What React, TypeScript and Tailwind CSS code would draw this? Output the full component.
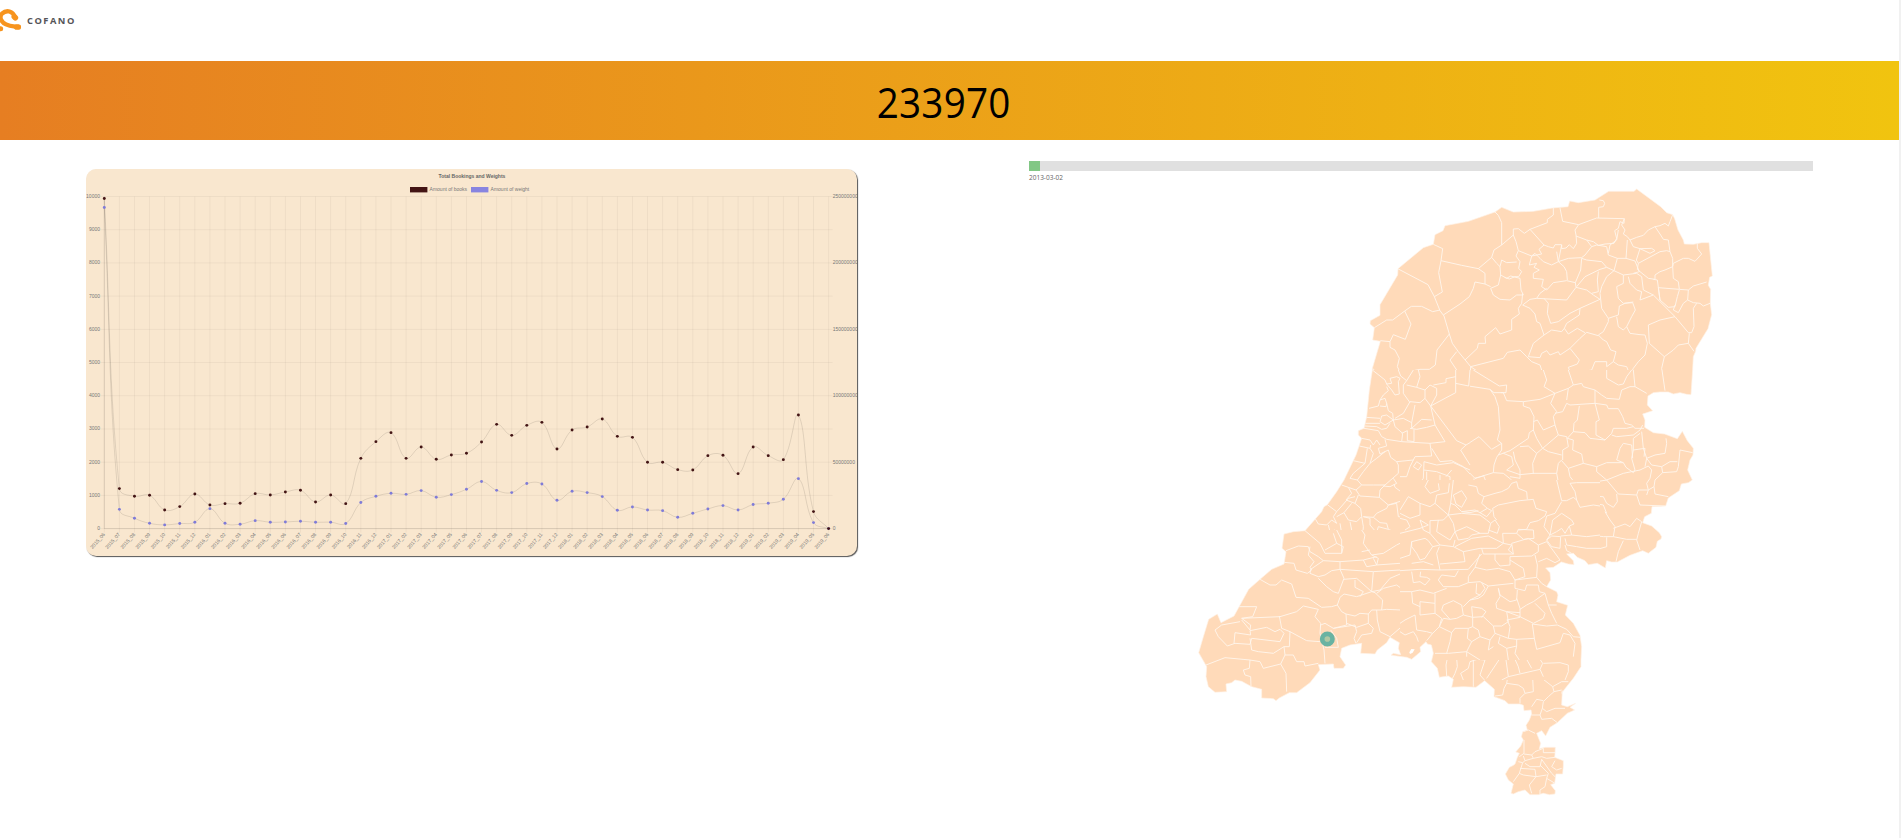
import React from "react";

type Point = { x: number; y: number };

/* ---------- chart data ---------- */

const books = [
  9940, 1204, 973, 1003, 562, 662, 1043, 712, 752, 762, 1053, 1013, 1103, 1153, 802, 1013, 752, 2116, 2618, 2889,
  2116, 2457, 2086, 2217, 2267, 2608, 3139, 2808, 3109, 3200, 2397, 2969, 3059, 3300, 2778, 2748, 1996, 1996, 1775,
  1765, 2197, 2207, 1655, 2457, 2197, 2076, 3420, 512, 0,
];

// millions
const weights = [
  241.7, 14.5, 7.8, 4, 2.8, 3.8, 4.8, 15, 4, 3.3, 6, 4.8, 5, 5.5, 4.8, 4.8, 3.8, 19.6, 24.3, 26.6, 25.8, 28.6, 23.6,
  25.6, 29.6, 35.4, 28.8, 27.1, 33.9, 33.6, 21.3, 28.1, 27.1, 24.1, 13.8, 16.3, 14, 13.5, 8.5, 11.5, 14.8, 17.3, 14,
  18.1, 19.1, 22.1, 37.6, 4.5, 0,
];

const months = books.map((_, i) => {
  const m = i + 5;
  return `${2015 + Math.floor(m / 12)}_${String((m % 12) + 1).padStart(2, "0")}`;
});

const LEFT = 18.3;
const RIGHT = 742.6;
const TOP = 27.5;
const BOTTOM = 359.6;
const STEP = (RIGHT - LEFT) / (books.length - 1);

const place = (values: number[], max: number): Point[] =>
  values.map((v, i) => ({ x: LEFT + i * STEP, y: BOTTOM - (v / max) * (BOTTOM - TOP) }));

const clampY = (y: number) => Math.min(BOTTOM, Math.max(TOP, y));

function spline(points: Point[]): string {
  const tension = 0.4;
  const controls = points.map((p, i) => {
    const prev = points[i - 1] ?? p;
    const next = points[i + 1] ?? p;
    const d01 = Math.hypot(p.x - prev.x, p.y - prev.y);
    const d12 = Math.hypot(next.x - p.x, next.y - p.y);
    const a = (tension * d01) / (d01 + d12);
    const b = (tension * d12) / (d01 + d12);
    return {
      inX: p.x - a * (next.x - prev.x),
      inY: clampY(p.y - a * (next.y - prev.y)),
      outX: p.x + b * (next.x - prev.x),
      outY: clampY(p.y + b * (next.y - prev.y)),
    };
  });
  return points
    .map((p, i) => {
      if (i === 0) return `M${p.x} ${p.y}`;
      const from = controls[i - 1];
      const to = controls[i];
      return `C${from.outX} ${from.outY} ${to.inX} ${to.inY} ${p.x} ${p.y}`;
    })
    .join("");
}

function BookingsChart() {
  const bookPoints = place(books, 10000);
  const weightPoints = place(weights, 250);
  const rows = Array.from({ length: 11 }, (_, i) => i);
  const grid = (BOTTOM - TOP) / 10;
  return (
    <div className="h-[387px] w-[771px] overflow-hidden rounded-[10px] bg-[#f9e7cf] shadow-[1px_1px_1px_#555]">
      <svg width="771" height="387" viewBox="0 0 771 387" fontFamily="Liberation Sans, Arial, sans-serif" fontSize="5">
        <text x="386" y="9.2" textAnchor="middle" fontWeight="bold" fill="#666">
          Total Bookings and Weights
        </text>
        <rect x="324" y="18" width="17.4" height="5.4" fill="#431414" />
        <text x="343.6" y="22" fill="#777">Amount of books</text>
        <rect x="385" y="18" width="17.4" height="5.4" fill="#8884e0" />
        <text x="404.6" y="22" fill="#777">Amount of weight</text>

        <g stroke="#000" strokeOpacity="0.045" strokeWidth="1">
          {rows.map((r) => (
            <line key={r} x1={LEFT - 4} x2={RIGHT + 4} y1={TOP + r * grid} y2={TOP + r * grid} />
          ))}
          {months.map((m, i) => (
            <line key={m} x1={LEFT + i * STEP} x2={LEFT + i * STEP} y1={TOP} y2={BOTTOM + 4} />
          ))}
        </g>
        <g stroke="#000" strokeOpacity="0.1" strokeWidth="1">
          <line x1={LEFT} x2={LEFT} y1={TOP} y2={BOTTOM} />
          <line x1={LEFT} x2={RIGHT} y1={BOTTOM} y2={BOTTOM} />
        </g>

        <g fill="#777">
          {rows.map((r) => (
            <text key={r} x="14" y={TOP + r * grid + 1.5} textAnchor="end">
              {10000 - r * 1000}
            </text>
          ))}
          {[0, 2, 4, 6, 8, 10].map((r) => (
            <text key={r} x="746.7" y={TOP + r * grid + 1.5}>
              {(10 - r) * 25000000}
            </text>
          ))}
          {months.map((m, i) => (
            <text
              key={m}
              textAnchor="end"
              transform={`translate(${LEFT + i * STEP + 1} ${BOTTOM + 6}) rotate(-49)`}
            >
              {m}
            </text>
          ))}
        </g>

        <g fill="none" stroke="#000" strokeOpacity="0.1" strokeWidth="1">
          <path d={spline(weightPoints)} />
          <path d={spline(bookPoints)} />
        </g>
        {weightPoints.map((p, i) => (
          <circle key={i} cx={p.x} cy={p.y} r="1.45" fill="#7f7bd8" />
        ))}
        {bookPoints.map((p, i) => (
          <circle key={i} cx={p.x} cy={p.y} r="1.45" fill="#431414" />
        ))}
      </svg>
    </div>
  );
}

/* ---------- map data: each sheet has its own origin, three units per pixel ---------- */

// `area` is the part of the map that the sheet's borders are drawn in
type Sheet = { id: string; dx: number; dy: number; area: string };
const north: Sheet = { id: "north", dx: 450, dy: 0, area: "M0 0H1590V570H0Z" };
const east: Sheet = { id: "east", dx: 450, dy: 570, area: "M840 570H1590V1200H1230V900H840Z" };
const southWest: Sheet = {
  id: "south-west",
  dx: 0,
  dy: 990,
  area: "M0 1050H630V1440H1240V1500H870V1890H0Z",
};
const limburg: Sheet = { id: "limburg", dx: 870, dy: 1380, area: "M870 1500H1590V1890H870Z" };
const coast: Sheet = { id: "coast", dx: 240, dy: 570, area: "M0 570H840V900H630V1050H0Z" };
const centre: Sheet = { id: "centre", dx: 630, dy: 900, area: "M630 900H1230V1440H630Z" };

const shift = (sheet: Sheet, line: string) =>
  line
    .trim()
    .split(/\s+/)
    .map((pair) => {
      const [x, y] = pair.split(",").map(Number);
      return `${x + sheet.dx} ${y + sheet.dy}`;
    })
    .join("L");

const outline: [Sheet, string][] = [
  [north, "98,480 103,443 90,432 91,422 120,406 120,374 173,285 174,266 250,203 280,193 285,164 309,152 315,137 385,124 465,96 485,82 520,96 580,94 637,84 684,80 689,63 715,68 765,60 806,34 882,34 890,27 962,80 980,98 998,104 1004,116 1014,150 1030,180 1033,192 1060,193 1085,188 1107,188 1117,288 1109,292 1105,316 1112,328 1111,370 1115,404 1104,446 1068,505 1067,514 1060,530"],
  [east, "1058,0 1053,74 1040,73 1020,68 1000,72 985,66 960,66 940,68 924,78 922,105 938,122 915,130 908,132 915,150 914,172 940,188 974,192 1012,206 1027,184 1042,212 1060,235 1059,255 1050,270 1043,300 1057,330 1045,338 1024,342 1018,362 985,384 977,408 936,410 934,430 914,440 908,458 935,468 958,488 965,500 963,507 952,514 948,532 925,550 908,542 870,556 832,576 815,576 800,572 796,594 772,580 745,584 735,572 712,562 700,550 680,552 700,572 702,584 685,582 664,576 640,592 617,594"],
  [centre, "450,278 452,300 440,320 470,335 474,345 470,365 503,376 496,405 520,430 540,466 545,500"],
  [southWest, "1173,450 1173,470 1150,505 1122,540 1115,550"],
  [limburg, "247,152 245,195 262,200 287,190 270,202 284,210 262,220 232,248 210,262 197,288 185,272 170,280 182,310 178,326 195,322 226,322 225,342 224,352 250,362 250,378 248,402 228,402 224,430 212,434 226,452 225,462 208,464 190,460 175,464 150,464 135,450 115,455 100,462 93,460 100,432 85,420 76,402 88,382 100,376 105,372 112,352 118,340 107,336 122,318 130,300 124,290 128,275 142,270 138,256 148,240 155,222 153,210 132,212 130,196 120,192 85,192 75,182 42,170 43,148 14,122"],
  [southWest, "858,532 820,530 785,532 790,508 775,498 748,502 742,475 724,455 730,430 724,405 712,402 708,395 690,412 692,425 665,448 650,442 620,438 603,436 610,430 632,434 625,415 628,398 600,382 590,398 562,420 555,432 512,430 515,400 480,405 455,415 450,440 467,465 460,475 432,475 430,462 385,464 390,480 360,518 320,548 298,548 268,564 258,572 250,566 215,564 215,538 185,530 155,514 135,510 125,518 108,522 110,545 75,547 55,530 48,500 50,470 26,428 40,380 56,328 82,312 93,338 132,318 176,238 210,208 245,178 282,162 288,125 276,115 282,72 310,65"],
  [coast, "105,482 155,425 162,410 172,404 200,365 222,330 258,255 275,205 265,195 265,182 282,175 290,140 298,60 307,0"],
  [north, "97,565 121,484"],
];

const borders: [Sheet, string[]][] = [
  [north, [
    "465,96 475,106 485,128 485,195 462,210 455,232 415,266 365,256 303,242",
    "280,193 308,206 303,242 296,278 307,336 283,350",
    "173,266 264,314 283,350 300,392 312,408 328,462 337,490 355,515 392,560 450,600",
    "103,443 140,420 158,420 194,393 214,379 245,379 278,395 300,390",
    "194,393 213,432 196,478 160,464 150,485 121,482",
    "150,485 150,502 165,510 178,535 172,560 182,580 200,600",
    "328,462 291,510 286,555 268,568 240,568 220,572 205,600",
    "485,195 520,165 528,185 535,212 528,228 540,245 536,265 545,275 536,290 525,290 508,297 494,292",
    "520,165 520,147 535,146 553,160 570,148 622,128 622,118 640,105 640,84",
    "570,148 612,195 597,208 605,222 575,228 568,255 590,250",
    "612,195 625,200 640,204 645,194 665,194 665,206 678,204 688,194 700,206 710,190 708,165 705,150 716,134 668,124 660,84",
    "716,134 770,114 853,116 852,130 840,125 835,145 824,152 830,175 822,190 795,192 775,196 760,185 740,180 708,168",
    "776,114 776,82 790,80 794,70 790,62 778,60",
    "853,116 845,135 855,150 850,162 862,170 870,180 890,172 910,166 925,150 945,140 960,137 975,130 985,138 990,125 998,104",
    "870,180 880,200 900,206 935,205 945,212 930,220 900,206 889,240 895,250 960,215 980,212 990,215 985,180 970,178 962,165 945,140",
    "895,250 892,268 900,275 925,295 945,298 945,285 960,275 975,270 998,260 998,235 990,215",
    "998,260 1000,250 1030,235 1045,235 1065,244 1085,222 1072,205 1072,190",
    "998,260 1000,295 1015,305 1018,328 955,323 960,360",
    "1018,328 1045,330 1060,318 1100,306",
    "1018,330 1012,350 1005,380 985,382 960,360 952,300 940,298",
    "1045,330 1043,360 1060,368 1080,370 1090,378 1110,370",
    "1043,360 1030,370 1015,398 1000,390 1005,375",
    "1070,370 1060,385 1062,440 1055,458 1045,458 1005,410 940,345 910,330 905,290 890,280 850,285",
    "850,285 850,310 830,320 835,355 850,370 880,366",
    "850,285 822,272 800,290 785,320 780,340 785,385 805,415 835,405 838,378 855,370 878,368 886,390 875,410 860,440 850,450 835,440 830,410",
    "805,415 805,425 790,455 775,465",
    "1005,410 960,420 925,435 928,490 973,530 965,565 970,600",
    "973,530 1000,510 1015,495 1045,490 1048,460",
    "1045,490 1062,514",
    "860,440 870,460 900,464 915,465 922,490 915,525 895,545 880,565 870,585",
    "455,232 470,250 480,260 482,285 500,295 512,288 540,295 543,330 550,345 530,345 510,360 480,358 460,345 452,325 475,315 482,285",
    "480,260 485,240 500,248 530,246",
    "415,266 435,280 435,312 405,306 400,325 388,350 360,372 310,405",
    "435,312 452,320",
    "548,340 545,370 535,385 538,402 515,418 515,450 480,462 467,443 435,470 437,490 415,490 412,505 375,540",
    "548,375 570,358 590,355 680,360 708,322 740,330 760,345 780,358 720,385 718,405 680,430 673,445",
    "612,355 625,370 622,400 632,430 655,425 690,400 720,385",
    "548,375 570,385 585,402 590,425 600,430 612,465 635,450 665,455 673,445",
    "612,465 580,490 565,530 600,533 605,520 620,512 630,525 655,515 660,525 690,505 720,475 740,457 775,467",
    "673,445 685,462 712,445 735,458",
    "392,560 490,535 502,517 540,510 560,530 575,545 600,555 615,600",
    "690,505 718,540 712,552 685,562 700,600",
    "775,465 790,480 800,485 812,510 828,515 820,545 835,555 860,560 870,585 885,600",
    "820,545 800,560 800,545 765,545 755,570 725,575 720,590",
    "590,250 582,262 598,270 580,280 580,295 610,298 605,320 620,330 640,308 680,302 706,308 708,322",
    "620,325 600,340 590,355",
    "575,228 585,220 600,235 610,245 635,255 655,245 650,215",
    "665,195 655,245 672,260 680,275 682,300",
    "655,245 685,235 725,233 735,225 755,200 740,180",
    "725,235 722,270 706,308",
    "725,235 740,240 785,245 800,262 780,268 735,290 710,320",
    "775,275 772,300 775,335 755,340",
    "755,200 770,195 800,200 805,225 832,235 822,272 800,262",
    "832,235 858,235 885,243 898,275 880,280",
    "858,235 862,180",
    "805,220 810,195 830,180 835,150",
    "535,212 575,228",
    "350,515 330,540 350,570 345,600",
    "392,560 390,600",
    "98,565 130,600",
    "865,290 870,310 890,330 905,335 900,360 940,345",
  ]],
  [east, [
    "390,0 386,48 450,58 462,68 490,68 500,92 550,95 600,88 645,70 685,55",
    "400,0 478,48 500,45 498,68 482,68",
    "272,108 350,212 378,225 417,200 455,238 485,220 472,210 480,180 475,110 465,80 450,58",
    "378,225 362,240 390,285 370,290",
    "370,290 405,325 460,308 462,285 470,262 485,240 485,220",
    "550,95 550,108 570,115 582,140 580,180 568,188 565,205 510,242 475,255",
    "610,0 620,30 612,50 645,70 632,100 650,125 640,140 645,165 610,180 592,150 580,155",
    "580,180 590,205 608,235 655,195 645,165",
    "645,130 668,125 680,100 690,105 765,100 765,60 730,50 725,40 700,45 685,55 680,90",
    "765,100 778,150 768,155 768,195 795,210",
    "700,185 735,188 750,205 795,210 815,190 820,175 860,175 880,170",
    "718,108 712,150 702,160 700,185 682,205",
    "765,100 800,105 805,116 835,116 848,140 855,160 875,165 885,175 912,175",
    "815,195 830,200 880,195 900,180 908,165",
    "540,230 565,228 590,250 608,235 625,245 665,255",
    "655,195 680,200 685,230 668,240 668,270",
    "590,250 578,280 580,312",
    "520,245 525,270 540,300 540,314 580,310 650,310 655,280 665,270",
    "510,320 540,325 540,314 500,300 520,285 515,260 490,250",
    "650,310 665,390 690,390 705,380 710,345 690,320 685,295 665,272",
    "685,295 730,280 770,290 800,278 850,278",
    "682,205 700,210 698,240 725,252 730,280",
    "850,278 830,270 840,235 850,220 875,225 878,265",
    "770,290 770,305 800,330 710,345",
    "710,345 705,360 735,378 790,380 800,400 820,412 832,395 830,372",
    "800,330 835,372 890,375 895,360 925,360 920,375",
    "800,330 850,310 900,300 925,288 935,300 930,325 920,340 925,360",
    "850,278 858,292 880,308 885,300 875,265 880,240 915,235 912,260",
    "905,185 910,235 920,265 915,290",
    "900,190 880,205 880,240",
    "920,265 945,255 975,250 980,220 978,205",
    "920,265 935,285 965,290 968,308 1010,305 1015,290 1020,240 1058,248",
    "965,290 990,275 1012,275",
    "968,308 945,330 942,350 925,360",
    "942,350 945,372 985,380",
    "890,375 900,405 977,408",
    "800,430 790,405 760,400 735,412 715,410",
    "795,425 810,450 825,470 820,500 790,500 750,495 700,500",
    "820,475 855,462 870,470 890,445 905,455 895,490 890,510 900,540",
    "820,500 860,508 890,508",
    "828,575 835,545 850,512",
    "800,502 800,530 765,540 770,580",
    "402,325 402,345 430,350",
    "430,315 440,340 465,355 500,350 515,330 490,310 460,308",
    "405,325 430,318",
    "665,390 640,430 618,435",
    "880,0 885,50 920,70",
    "966,0 975,62",
    "765,60 785,75 800,85 838,88 845,60 870,50 885,50",
    "685,0 700,45",
    "800,0 800,25 835,45 850,42 860,20 875,0",
  ]],
  [coast, [
    "307,0 330,18 345,30 350,42 365,40 360,25 380,20 390,25 385,35 388,72 375,75 365,60 350,42",
    "385,0 392,18 410,32 430,0",
    "410,32 400,45 400,70 420,98",
    "410,45 440,52 465,60 465,85 450,98 420,95 400,130 375,145",
    "465,60 480,45 500,55 500,75 482,108",
    "482,108 557,68 557,0",
    "440,52 450,20 445,0",
    "490,45 528,38 528,26 557,20",
    "557,40 596,48 600,0",
    "482,108 560,212 588,225 600,218",
    "588,225 572,240 600,285",
    "485,235 510,275 545,272 580,290 600,312",
    "350,50 355,62 340,75 330,90 325,108 297,115",
    "330,90 345,85 350,100 348,110 330,108",
    "350,100 355,122 368,130 370,150 350,135 335,138 330,155 345,165 370,150",
    "288,142 330,145",
    "286,160 330,160",
    "284,168 320,170 335,178 350,175 360,160",
    "282,175 325,182 335,200 350,208 395,215 398,190 375,170 370,150 400,145 425,158 425,175",
    "420,175 440,178 470,172 495,165",
    "425,158 435,105",
    "425,175 455,148 485,150",
    "395,190 412,182 412,212 432,215 432,178",
    "465,85 482,108 495,165 525,215 480,220 395,215",
    "345,208 350,228 325,235 330,252 355,240 362,262 380,275 430,270 435,260 485,258 482,235 480,220",
    "275,205 300,210 310,225 320,210 330,225",
    "268,228 300,235 302,225",
    "292,235 285,280 250,272",
    "285,280 250,310 240,325 262,330 280,305 300,280 310,250 300,235",
    "300,280 320,265 345,245",
    "275,345 310,345 345,345 385,310 385,285 380,275",
    "262,330 275,345 258,360 270,378 328,382 330,360 345,345",
    "328,382 355,405 350,415 320,430 310,442 280,440",
    "340,348 360,350 380,340 370,325",
    "372,342 375,352 420,385 440,350 460,325 462,275",
    "390,320 410,320 420,290 430,270",
    "430,290 445,300 455,285 440,275 430,290",
    "380,400 355,405 420,385 440,400 450,405 455,425 430,445 385,440 380,400",
    "462,300 500,305 540,320 540,345",
    "470,305 470,340",
    "510,340 510,315",
    "462,275 500,285 550,278 600,300",
    "545,300 528,320",
    "215,345 235,352 258,360",
    "172,404 200,425 218,405 235,385 255,380",
    "235,352 245,370 228,390 255,400 265,375",
    "200,425 190,440 200,460 185,450 170,465 145,462 135,445",
    "245,400 222,428 200,440",
    "255,400 272,415 275,440",
    "275,440 280,470 275,540",
    "222,428 235,450 260,455 275,440",
    "105,482 125,495 150,520 175,510 210,505 215,540",
    "175,465 180,485 195,480 205,505",
    "210,460 215,490 230,500 245,480 240,455",
    "280,440 300,445 300,465 320,488 325,470 355,478 350,460 330,458 310,442",
    "355,478 385,490",
  ]],
  [southWest, [
    "288,122 325,108 355,110 360,125 385,140 400,152 450,155",
    "345,62 390,100 405,130 455,130 460,110 440,100 405,120",
    "455,130 455,90 440,60",
    "440,100 430,70",
    "515,60 525,75 520,100 545,135 580,130 620,105 630,100",
    "515,125 540,120",
    "545,135 565,145 560,165 630,160",
    "282,157 312,160 318,180 352,190 365,180 360,172 372,155 355,135 360,110",
    "385,200 360,190 362,178 400,152",
    "385,200 405,195 425,182 450,178 450,155 520,150 560,140",
    "520,150 530,170 560,165 550,145",
    "385,205 410,230 430,245 445,250",
    "210,208 240,225 258,225 275,210 305,222 318,262 355,265 395,292 425,290 442,285 450,262 462,252",
    "445,250 462,205 450,178",
    "462,252 500,260 545,245 550,185 450,178",
    "550,185 630,180",
    "460,208 500,205 545,245",
    "495,210 495,232 520,245 510,260",
    "147,290 200,290 188,320 155,325 270,320 320,305 340,288 385,298",
    "155,325 182,345 180,360 155,330",
    "150,335 95,345 75,360 85,380 112,408 135,400 180,403 185,385 270,395 282,370 270,358 255,365 230,352 180,362 182,375 135,368 132,400",
    "268,318 275,355 300,365 350,392 390,395",
    "300,365 298,410 282,410 285,435 310,435 320,455 342,455 345,468 385,460",
    "180,385 185,420 205,425 250,430 282,410",
    "48,465 105,443 180,450 210,455 220,475 272,462 285,435",
    "180,450 178,475 160,480 165,495 182,500 183,530",
    "272,462 288,490 290,545",
    "385,298 375,320 392,340 390,370 402,420 405,460",
    "442,285 455,305 468,312 470,345 430,355 405,340 392,345",
    "430,355 495,345 500,365 492,385 498,400",
    "405,412 445,412 440,385 422,360",
    "468,312 495,318 510,310 535,312 535,340 500,352 470,340",
    "535,312 545,300 575,300 578,270 555,248 545,245",
    "535,340 550,355 545,370 515,375 500,398",
    "560,300 562,330 570,365 600,380 635,350",
    "575,300 590,298 632,300",
    "545,245 570,240 600,205 635,190",
    "560,250 580,235 620,225 640,240",
    "775,430 768,465 770,498",
    "800,445 802,470 795,490 785,510",
    "862,448 840,455 835,475 812,490 820,510",
    "862,448 885,450 870,495 885,512",
    "930,445 900,490 890,505",
    "948,450 955,500 935,510 932,540 935,560",
    "955,500 1050,478 1058,460 1035,425",
    "960,415 985,470 990,490",
    "1000,430 1025,475",
    "1060,460 1110,458 1135,465 1135,485 1125,510 1135,518",
    "1050,478 1060,500",
    "850,450 850,530",
  ]],
  [centre, [
    "0,160 60,145 85,135 60,120 70,150 90,160 90,122 130,120 145,105 160,130 165,155",
    "165,155 200,140 240,160 215,165 205,175 175,180 165,155",
    "165,155 150,180 110,155 115,120",
    "145,105 185,100 240,105 260,120 272,130 265,160 240,160",
    "272,130 285,120 298,140 292,160 265,150",
    "60,70 90,80 105,70 145,105 152,70 160,0",
    "85,0 75,20 90,40 118,30 115,10",
    "105,70 110,45 145,38 148,10",
    "160,45 185,32 200,55 185,82 168,72 160,45",
    "152,70 165,75 185,95 225,90 240,98 262,85 245,70 252,50 235,40 230,20 205,15",
    "240,98 260,110 275,92 262,85",
    "185,95 210,98 235,92",
    "252,50 285,40 305,35 325,25 335,10 350,5 355,25 380,35 382,58",
    "278,85 295,75 360,62 400,58 408,85 440,95 435,108 415,122 390,128 380,148 355,150",
    "278,85 282,110 290,120",
    "470,0 485,62 500,62 520,52 530,60 525,35 510,10 530,8 600,8",
    "485,65 465,100 440,108 432,140 450,165 458,120 485,100 515,120 522,132 508,138 515,165 482,168",
    "530,60 540,82 580,75 600,78",
    "450,165 470,155 485,145 495,160 508,138",
    "515,165 560,170 600,165",
    "495,175 500,195 530,200 560,205 600,205",
    "440,180 450,165",
    "495,195 500,212 515,220",
    "0,100 30,115 60,105 60,70 25,50 0,90",
    "0,115 20,120 30,140 15,150",
    "35,185 75,175 85,182 98,200 75,235 60,240 50,220 35,200 35,185",
    "90,160 120,195 160,200 165,180",
    "98,200 120,195",
    "118,200 110,220 120,270",
    "160,200 190,215 195,245 120,252",
    "190,215 240,205 290,205 310,190 335,195 325,210 340,222 250,222 245,205",
    "165,200 215,175 265,168 300,185 310,190 308,160",
    "0,272 60,268 120,270 205,268 222,248 245,222",
    "35,185 30,225 0,235",
    "35,250 70,245 100,255",
    "225,262 205,290 205,308 175,320 130,320 115,300 125,285 165,290 175,272",
    "240,222 225,262 260,270 295,265 330,275 345,300",
    "340,222 335,190 385,175 415,195 415,215 395,228 330,230 330,255 300,258 285,240 285,222",
    "330,240 370,265 375,290 345,300 410,292 412,255 405,225",
    "415,245 440,235 465,248 480,240 440,185 415,195",
    "205,308 240,305 265,318 340,310",
    "230,310 228,340 240,345 255,325 245,308",
    "240,345 210,360 190,380",
    "265,318 250,345 235,355 210,360",
    "35,275 40,308 60,305 75,315 90,298 80,292 60,290 62,275",
    "0,335 35,335 60,330 100,340 140,325",
    "35,335 38,370 60,380",
    "308,160 350,160 355,148 400,150 402,175 370,178 350,160",
    "440,180 455,200 480,205 482,170 455,168 440,180",
    "410,292 425,310 440,320",
    "345,300 345,325 375,332 380,315 415,315 418,335 435,340",
    "295,325 300,345 330,365 350,360 352,330",
    "295,325 300,350 288,370 290,385 320,395 360,410 360,385 350,355",
    "320,395 360,398",
    "435,340 400,365 380,375 360,388",
    "360,410 400,430 430,415 435,400 405,370",
    "435,340 445,375 470,375",
    "60,365 105,370 105,400 60,405 60,365",
    "105,370 105,340",
    "105,400 125,415 118,440 98,460 80,482",
    "445,375 455,400 470,430",
    "397,432 440,438 472,435 500,448 520,470 540,472",
    "397,432 403,475 410,508 480,488 490,460 510,465 525,490 520,530",
    "320,420 360,412",
    "320,395 325,425 305,438 280,438 285,460 325,475 330,440 322,420",
    "325,475 350,478 350,498 320,505 295,490 300,470",
    "350,478 403,475",
    "320,505 325,540",
    "350,498 345,520 358,540",
    "280,438 250,410 218,412 218,440 235,450 240,470 270,480 285,460",
    "215,380 245,385 258,395 245,412",
    "215,380 218,412 190,405 170,415 150,418 125,390 130,375 160,362 185,375 190,405",
    "150,418 130,415 118,440 155,458 165,445 205,445 218,440",
    "155,458 150,485 140,520",
    "205,445 202,475 215,485 240,470",
    "215,485 200,515 200,530",
    "270,480 265,510 280,500",
    "105,520 145,520 200,515 240,540",
    "0,455 15,465 40,455 50,470 55,485",
    "45,405 50,450 80,455 98,460",
    "0,430 15,420 45,405",
  ]],
  [limburg, [
    "158,112 160,155 135,160",
    "155,94 158,112 190,118 218,140 245,125 265,125",
    "82,118 80,130 115,135 130,145 135,160 120,175 120,190",
    "80,130 72,145 68,165 45,168",
    "218,140 222,155 205,170 190,185 187,205 180,225 155,225",
    "155,200 170,178 190,182",
    "222,155 245,150",
    "187,205 200,215 225,205 255,205",
    "180,225 185,238 215,235 232,248",
    "130,275 145,270 165,280",
    "132,300 132,340 118,350",
    "132,342 155,345 165,335 190,325 190,338 225,338",
    "155,345 160,355 135,362 130,348",
    "160,355 185,350 200,355 225,352",
    "115,365 128,368 135,362",
    "128,368 118,400 100,425",
    "135,370 150,380 180,380 185,358",
    "120,385 165,388 168,410 130,405 118,400",
    "180,375 205,400 200,415 225,430",
    "168,410 200,405",
    "168,410 148,435 155,460",
    "185,358 215,400 225,410",
    "200,415 195,440 180,450 180,462",
    "225,362 215,380 230,390 245,385",
  ]],
];

const outlinePath = `M${outline.map(([sheet, line]) => shift(sheet, line)).join("L")}Z`;

function NetherlandsMap() {
  return (
    <svg width="530" height="630" viewBox="0 0 1590 1890" aria-label="Netherlands">
      <defs>
        <clipPath id="land">
          <path d={outlinePath} />
        </clipPath>
        {borders.map(([sheet]) => (
          <clipPath key={sheet.id} id={sheet.id}>
            <path d={sheet.area} />
          </clipPath>
        ))}
      </defs>
      <path d={outlinePath} fill="#ffdab9" stroke="#fff3e8" strokeWidth="2" strokeLinejoin="round" />
      <g clipPath="url(#land)" fill="none" stroke="#fff5ec" strokeWidth="2.8" strokeLinejoin="round">
        {borders.map(([sheet, lines]) => (
          <path
            key={sheet.id}
            clipPath={`url(#${sheet.id})`}
            d={lines.map((line) => `M${shift(sheet, line)}`).join("")}
          />
        ))}
      </g>
      <path d="M658 1417L664 1407L674 1408L668 1418L660 1422Z" fill="#fff" />
      <circle cx="412" cy="1377" r="15.5" fill="#b0c8a4" stroke="#69b3a2" strokeWidth="14" />
    </svg>
  );
}

function Logo() {
  return (
    <div className="flex h-[61px] items-start">
      <svg width="21" height="32" viewBox="0 0 63 96">
        <g fill="none" stroke="#f7941e" strokeLinecap="round">
          <path d="M45 52C39 33 20 28 6 41C-4 52 4 66 18 73C30 79 42 79 55 81" strokeWidth="13" />
          <path d="M43 50L46 53M50 81H55" strokeWidth="17" />
          <path d="M0 86H2" strokeWidth="15" />
        </g>
      </svg>
      <span className="ml-[6px] mt-[14px] font-['Open_Sans',sans-serif] text-[9.3px] font-bold leading-[13px] tracking-[1.5px] text-[#555558]">
        COFANO
      </span>
    </div>
  );
}

export default function App() {
  return (
    <div className="flex h-[838px] w-full overflow-hidden bg-white">
      <main className="flex min-w-0 flex-1 flex-col">
        <Logo />
        <div className="flex h-[79px] shrink-0 items-center justify-center bg-linear-to-r/srgb from-[#e67e22] to-[#f1c40f] pr-3 pt-[3px]">
          <span className="scale-x-[0.92] font-['Open_Sans',sans-serif] text-[42px] leading-none tracking-[0.2px] text-black">
            233970
          </span>
        </div>
        <div className="flex">
          <section className="w-[1029px] shrink-0 pl-[86px] pt-[29px]">
            <BookingsChart />
          </section>
          <section className="flex w-[784px] flex-col pt-[21px]">
            <div className="h-[10px] bg-[#e0e0e0]">
              <div className="h-full w-[11px] bg-[#82c785]" />
            </div>
            <div className="h-[9px] font-['Open_Sans',sans-serif] text-[6.5px] leading-[13px] text-[#666]">
              2013-03-02
            </div>
            <div className="ml-[161px]">
              <NetherlandsMap />
            </div>
          </section>
        </div>
      </main>
      <div className="w-[2px] shrink-0 bg-[#f1f1f1]" />
    </div>
  );
}
